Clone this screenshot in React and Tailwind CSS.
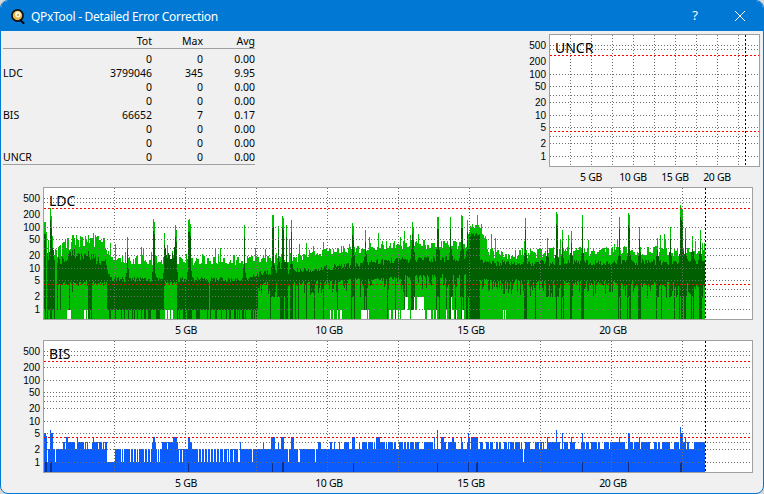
import { useMemo } from "react"

const font = { fontFamily: '"Noto Sans", "Liberation Sans", sans-serif' }
const axisFont = { fontFamily: '"Liberation Sans", sans-serif' }

const rows = [
  ["", "0", "0", "0.00"],
  ["LDC", "3799046", "345", "9.95"],
  ["", "0", "0", "0.00"],
  ["", "0", "0", "0.00"],
  ["BIS", "66652", "7", "0.17"],
  ["", "0", "0", "0.00"],
  ["", "0", "0", "0.00"],
  ["UNCR", "0", "0", "0.00"],
]

// tick label centres and grid rows, counted from the top of a chart frame
const yLabels = [
  ["500", 12],
  ["200", 28],
  ["100", 41],
  ["50", 53],
  ["20", 69],
  ["10", 82],
  ["5", 94],
  ["2", 110],
  ["1", 123],
]
const gridRows = [11, 15, 40, 52, 61, 68, 81, 93, 102, 109, 122]
const redRows = [21, 97]

function seeded(seed) {
  let s = seed
  return () => {
    s = (s + 0x6d2b79f5) | 0
    let t = Math.imul(s ^ (s >>> 15), 1 | s)
    t = (t + Math.imul(t ^ (t >>> 7), 61 | t)) ^ t
    return ((t ^ (t >>> 14)) >>> 0) / 4294967296
  }
}

function interp(points, x) {
  for (let i = 1; i < points.length; i++) {
    if (x <= points[i][0]) {
      const [x0, y0] = points[i - 1]
      const [x1, y1] = points[i]
      return y0 + ((y1 - y0) * (x - x0)) / (x1 - x0 || 1)
    }
  }
  return points[points.length - 1][1]
}

const inRanges = (ranges, x) => ranges.some(([a, b]) => x >= a && x <= b)

const ldcTop = [[45, 254], [50, 258], [57, 252], [66, 246], [72, 242], [90, 241], [105, 244], [110, 254], [125, 260], [250, 260], [300, 257], [330, 251], [390, 245], [468, 245], [471, 226], [481, 226], [490, 252], [510, 255], [555, 253], [615, 250], [705, 252]]
const bandTop = [[45, 264], [57, 262], [75, 254], [90, 256], [107, 264], [112, 279], [164, 279], [165, 256], [177, 256], [178, 280], [250, 279], [262, 273], [310, 270], [400, 260], [470, 258], [490, 263], [705, 262]]
const bandBottom = [[45, 283], [250, 284], [300, 284], [400, 278], [470, 276], [490, 281], [705, 285]]
const ldcSpikes = [[45, 222], [46, 222], [47, 232], [51, 208], [52, 216], [53, 236], [128, 237], [154, 219], [155, 222], [165, 233], [176, 225], [177, 230], [189, 220], [190, 219], [191, 224], [245, 225], [273, 215], [274, 215], [279, 226], [283, 216], [284, 218], [287, 225], [292, 220], [353, 223], [354, 226], [366, 230], [413, 222], [414, 228], [438, 217], [439, 217], [451, 217], [462, 215], [463, 216], [468, 220], [526, 218], [548, 238], [557, 212], [558, 214], [563, 230], [572, 231], [583, 215], [620, 217], [629, 213], [630, 215], [640, 227], [658, 238], [671, 227], [681, 205], [682, 208], [683, 210], [686, 228], [693, 236], [701, 230]]
const solidBelow = [[45, 57], [76, 76], [89, 92], [108, 164], [178, 258], [470, 480]]
const lightBelow = [[58, 72], [75, 88], [93, 107], [165, 177]]
const whiteFoot = [[68, 71], [85, 86], [88, 88], [166, 167], [169, 170], [172, 173], [331, 331], [334, 334], [338, 338], [341, 342], [362, 367], [369, 369], [390, 391], [394, 395], [397, 398], [400, 400], [402, 410], [412, 425], [428, 431], [434, 434], [437, 437], [447, 447], [452, 454], [457, 457], [463, 464], [504, 504], [506, 506]]
const whiteTall = [[405, 408, 297], [413, 415, 290], [418, 424, 297], [447, 447, 297], [452, 452, 297]]

function buildLdc() {
  const rand = seeded(41)
  const spikes = new Map(ldcSpikes)
  let light = ""
  let dark = ""
  let jitter = 0
  for (let x = 45; x <= 705; x++) {
    if (x % 2 === 0 || rand() > 0.6) jitter = rand()
    const c = x + 0.5
    const spike = spikes.get(x)
    const rough = x < 110 ? 16 : 10
    let top = interp(ldcTop, x) + (jitter - 0.5) * rough
    if (rand() < 0.09) top -= 5 + rand() * 10
    if (spike) top = spike
    let floor = 319
    if (inRanges(whiteFoot, x)) floor = 310
    const tall = whiteTall.find(([a, b]) => x >= a && x <= b)
    if (tall) floor = tall[2]
    light += `M${c} ${Math.round(top)}V${floor}`

    const bt = interp(bandTop, x) + (rand() - 0.5) * (x < 110 ? 10 : 6)
    const bb = interp(bandBottom, x) + (rand() - 0.5) * 5
    let darkTop = Math.round(bt)
    let darkEnd = Math.round(bb)
    // dark stripes climb along with the tall spikes
    const nearSpike = spike || spikes.has(x - 1) || spikes.has(x + 1)
    if (spike) darkTop = Math.min(darkTop, spike + 12)
    else if (nearSpike) darkTop = Math.min(darkTop, darkTop - 8)
    if (inRanges(lightBelow, x)) {
      if (rand() < 0.06) darkEnd = 310
    } else if (inRanges(solidBelow, x)) {
      darkEnd = 310
      if (rand() < 0.4) darkEnd = 319
      if (x < 58 && rand() < 0.35) darkTop = 0
      if (x > 108 && x < 258 && rand() < 0.04) darkTop = 0
      if (x >= 470 && x <= 480) {
        darkTop = Math.min(darkTop, 232 + Math.round(rand() * 5))
        darkEnd = 319
      }
    } else if (nearSpike || rand() < 0.07) {
      darkEnd = rand() < 0.65 ? 319 : 297
    } else if (rand() < 0.3) {
      darkEnd = Math.round(bb) + 4 + Math.round(rand() * 8)
    }
    if (inRanges(whiteFoot, x)) darkEnd = Math.min(darkEnd, 310)
    if (darkTop > 0) dark += `M${c} ${darkTop}V${darkEnd}`
  }
  return [
    { d: light, color: "#00bf00" },
    { d: dark, color: "#005f00" },
  ]
}

const bisSpikes = [[45, 433], [46, 433], [47, 436], [51, 430], [52, 433], [53, 433], [154, 437], [155, 437], [174, 437], [175, 437], [176, 437], [177, 437], [189, 437], [190, 437], [272, 437], [273, 437], [274, 437], [275, 437], [282, 437], [283, 437], [284, 437], [292, 437], [293, 437], [294, 437], [353, 437], [354, 437], [355, 437], [377, 437], [378, 437], [379, 437], [380, 437], [435, 437], [438, 430], [442, 437], [443, 437], [444, 437], [453, 437], [454, 437], [462, 437], [469, 433], [470, 437], [472, 437], [473, 437], [474, 437], [475, 437], [476, 437], [477, 437], [478, 437], [548, 437], [557, 430], [563, 433], [572, 437], [583, 433], [620, 437], [629, 433], [630, 433], [640, 437], [681, 427], [682, 433], [683, 433], [686, 437], [67, 437], [68, 437], [78, 437], [94, 437]]
const bisClusters = [[64, 75], [78, 88], [93, 107], [153, 156], [163, 178], [190, 192], [233, 233], [241, 241], [264, 264], [279, 279], [318, 322], [330, 335], [340, 340], [345, 349], [360, 361], [363, 367], [369, 375], [381, 390], [391, 396], [400, 406], [407, 416], [417, 419], [425, 435], [442, 446], [449, 456], [462, 463], [468, 470], [481, 483], [487, 493], [497, 501], [505, 520], [522, 523], [526, 530], [535, 545], [548, 560], [565, 575], [580, 600], [605, 625], [630, 650], [655, 670], [675, 690], [695, 705]]
const bisDarkCols = [46, 47, 51, 52, 189, 273, 283, 284, 354, 438, 469, 477, 478, 583, 629, 681, 682]
const bisGaps = [48, 56, 108, 109, 110, 111, 112, 113, 114, 115, 122, 124, 131, 134, 137, 139, 145, 148, 151, 158, 160, 180, 183, 199, 202, 205, 208, 211, 214, 217, 220, 224, 228, 230, 234, 239, 240, 253, 289, 299, 300, 316, 524]

function buildBis() {
  const rand = seeded(7)
  const spikes = new Map(bisSpikes)
  let blue = ""
  let navy = ""
  for (let x = 45; x <= 705; x++) {
    const c = x + 0.5
    let top = 449
    if (inRanges(bisClusters, x) && rand() < 0.85) top = 442
    if (spikes.has(x)) top = spikes.get(x)
    if (bisGaps.includes(x)) top = 462
    blue += `M${c} ${top}V472`
    if (bisDarkCols.includes(x)) navy += `M${c} 462V472`
  }
  return [
    { d: blue, color: "#0a5cff" },
    { d: navy, color: "#0a2f8c" },
  ]
}

function Chart({ label, top, left, width, xStep, xFirst, xCount, xLabels, blackX, extraRows = [], series = [], className }) {
  const height = 133
  const grid = [...gridRows, ...extraRows]
  const vx = Array.from({ length: xCount }, (_, i) => xFirst + i * xStep)

  return (
    <div className={`flex flex-col ${className || ""}`}>
      <div className="flex">
        <div className="relative h-[133px] flex-1 text-[10px] text-black" style={axisFont}>
          {yLabels.map(([t, y]) => (
            <span key={t} className="absolute right-[3px] -translate-y-1/2 leading-none" style={{ top: y }}>
              {t}
            </span>
          ))}
        </div>
        <div className="relative box-border border border-[#a0a0a0] bg-white" style={{ width, height }}>
          <svg
            className="block"
            width={width - 2}
            height={height - 2}
            viewBox={`${left + 1} ${top + 1} ${width - 2} ${height - 2}`}
            shapeRendering="crispEdges"
          >
            {series.map((s) => (
              <path key={s.color} d={s.d} stroke={s.color} strokeWidth="1" fill="none" />
            ))}
            {grid.map((r) => (
              <line key={r} x1={left + 1} x2={left + width - 1} y1={top + r + 0.5} y2={top + r + 0.5} stroke="#6e6e6e" strokeDasharray="1 2" />
            ))}
            {vx.map((x) => (
              <line key={x} x1={x + 0.5} x2={x + 0.5} y1={top + 1} y2={top + height - 1} stroke="#6e6e6e" strokeDasharray="1 2" />
            ))}
            {redRows.map((r) => (
              <line key={r} x1={left + 1} x2={left + width - 1} y1={top + r + 0.5} y2={top + r + 0.5} stroke="#ff0000" strokeDasharray="2 2" />
            ))}
            <line x1={blackX + 0.5} x2={blackX + 0.5} y1={top + 1} y2={top + height - 1} stroke="#000000" strokeDasharray="2 2" />
          </svg>
          <span className="absolute left-[5px] top-[4px] text-[14px] leading-[18px] text-black">{label}</span>
        </div>
      </div>
      <div className="relative h-[20px] text-[10.5px] tracking-[-0.3px] text-black">
        {xLabels.map(([t, x]) => (
          <span key={t} className="absolute top-[10px] -translate-x-1/2 -translate-y-1/2 whitespace-nowrap leading-none" style={{ left: x }}>
            {t}
          </span>
        ))}
      </div>
    </div>
  )
}

function Logo() {
  return (
    <svg width="14" height="15" viewBox="0 0 14 15" className="shrink-0">
      <path d="M9 11 L12.5 14" stroke="#000" strokeWidth="2" strokeLinecap="round" />
      <circle cx="6.5" cy="6.5" r="5.6" fill="#e8b84a" stroke="#111" strokeWidth="1.7" />
      <circle cx="7" cy="5.5" r="2.9" fill="#fff4d6" />
      <circle cx="7" cy="6" r="1" fill="#c79a3a" />
    </svg>
  )
}

export default function App() {
  const ldc = useMemo(buildLdc, [])
  const bis = useMemo(buildBis, [])

  return (
    <div className="h-[494px] w-[764px] bg-[#d8d8d8]" style={font}>
      <div className="flex h-full flex-col overflow-hidden rounded-[8px] border border-[#0078d4] bg-[#f0f0f0]">
        {/* Title bar */}
        <div className="flex h-[30px] shrink-0 items-center bg-[#0078d4] pl-[10px] text-white">
          <Logo />
          <span className="ml-[6px] mt-[1px] text-[12px] tracking-[-0.3px]">QPxTool - Detailed Error Correction</span>
          <span className="ml-auto mr-[36px] text-[13px]">?</span>
          <svg width="12" height="12" viewBox="0 0 12 12" className="mr-[17px]">
            <path d="M1 1 L11 11 M11 1 L1 11" stroke="#fff" strokeWidth="1" />
          </svg>
        </div>

        <div className="flex flex-col pt-[3px]">
          <div className="flex justify-between pr-[3px]">
            {/* Summary table */}
            <div className="ml-[2px] w-[252px] text-[10.5px] leading-[14px] text-black">
              <div className="grid grid-cols-[40px_109px_51px_52px] border-b border-[#a0a0a0] text-right">
                <span />
                <span>Tot</span>
                <span>Max</span>
                <span>Avg</span>
              </div>
              <div className="border-b border-[#a0a0a0] pt-[3px]">
                {rows.map((r, i) => (
                  <div key={i} className="grid h-[14px] grid-cols-[40px_109px_51px_52px] text-right">
                    <span className="text-left">{r[0]}</span>
                    <span>{r[1]}</span>
                    <span>{r[2]}</span>
                    <span>{r[3]}</span>
                  </div>
                ))}
              </div>
            </div>

            <Chart
              className="w-[240px]"
              label="UNCR"
              top={34}
              left={549}
              width={211}
              xStep={21}
              xFirst={570}
              xCount={9}
              blackX={745}
              xLabels={[["5 GB", 71], ["10 GB", 113], ["15 GB", 155], ["20 GB", 197]]}
            />
          </div>

          <Chart
            className="mr-[10px]"
            label="LDC"
            top={187}
            left={44}
            width={710}
            xStep={71}
            xFirst={115}
            xCount={9}
            blackX={706}
            series={ldc}
            xLabels={[["5 GB", 185], ["10 GB", 328], ["15 GB", 470], ["20 GB", 612]]}
          />
          <Chart
            className="mr-[10px]"
            label="BIS"
            top={340}
            left={44}
            width={710}
            xStep={71}
            xFirst={115}
            xCount={9}
            blackX={706}
            extraRows={[27, 56]}
            series={bis}
            xLabels={[["5 GB", 185], ["10 GB", 328], ["15 GB", 470], ["20 GB", 612]]}
          />
        </div>
      </div>
    </div>
  )
}
